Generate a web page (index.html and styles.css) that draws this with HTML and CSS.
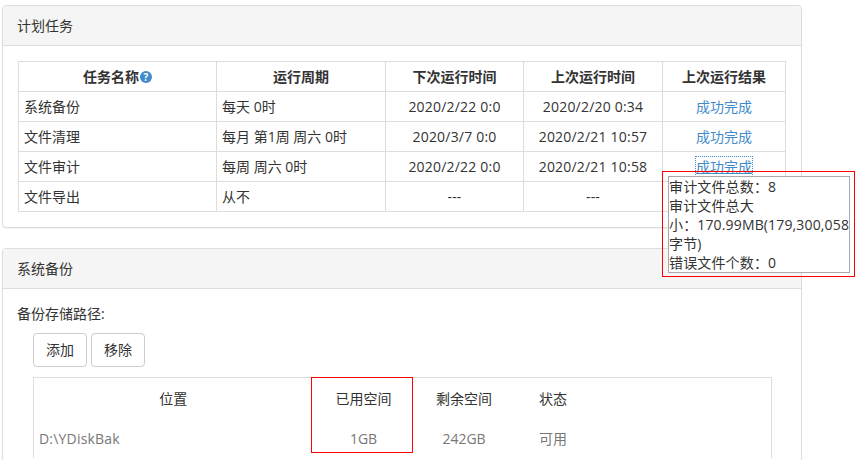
FILE: index.html
```html
<!DOCTYPE html>
<html lang="zh-CN">
<head>
<meta charset="utf-8">
<title>计划任务</title>
<link rel="stylesheet" href="styles.css">
</head>
<body>
<section class="panel">
  <header class="panel-head">计划任务</header>
  <div class="panel-body">
    <table class="tasks">
      <colgroup><col class="c1"><col class="c2"><col class="c3"><col class="c4"><col class="c5"></colgroup>
      <thead>
        <tr><th>任务名称<svg class="help" width="12" height="12" viewBox="0 0 12 12"><circle cx="6" cy="6" r="6" fill="#428bca"/><text x="6" y="9.5" text-anchor="middle" class="help-q">?</text></svg></th><th>运行周期</th><th>下次运行时间</th><th>上次运行时间</th><th>上次运行结果</th></tr>
      </thead>
      <tbody>
        <tr><td>系统备份</td><td>每天 0时</td><td class="mid">2020/2/22 0:0</td><td class="mid">2020/2/20 0:34</td><td class="mid"><a class="link">成功完成</a></td></tr>
        <tr><td>文件清理</td><td>每月 第1周 周六 0时</td><td class="mid">2020/3/7 0:0</td><td class="mid">2020/2/21 10:57</td><td class="mid"><a class="link">成功完成</a></td></tr>
        <tr><td>文件审计</td><td>每周 周六 0时</td><td class="mid">2020/2/22 0:0</td><td class="mid">2020/2/21 10:58</td><td class="mid"><a class="link focus">成功完成</a></td></tr>
        <tr><td>文件导出</td><td>从不</td><td class="mid">---</td><td class="mid">---</td><td class="mid"></td></tr>
      </tbody>
    </table>
  </div>
</section>
<section class="panel second">
  <header class="panel-head">系统备份</header>
  <div class="panel-body">
    <div class="label">备份存储路径:</div>
    <div class="indent">
      <div class="buttons"><button class="btn">添加</button><button class="btn">移除</button></div>
      <table class="paths">
        <colgroup><col class="p1"><col class="p2"><col class="p3"><col class="p4"><col></colgroup>
        <thead><tr><th>位置</th><th>已用空间</th><th>剩余空间</th><th>状态</th><th></th></tr></thead>
        <tbody><tr><td class="left">D:\YDiskBak</td><td>1GB</td><td>242GB</td><td>可用</td><td></td></tr></tbody>
      </table>
    </div>
  </div>
</section>
<div class="tip">审计文件总数：8<br>审计文件总大<br>小：170.99MB(179,300,058<br>字节)<br>错误文件个数：0</div>
<div class="mark mark-tip"></div>
<div class="mark mark-used"></div>
</body>
</html>
```

FILE: styles.css
```css
* { box-sizing: border-box; }
html, body { height: 460px; overflow: hidden; }
body {
  margin: 0;
  padding: 5px 0 0 2px;
  width: 861px;
  position: relative;
  background: #fff;
  font-family: "Open Sans", "Noto Sans CJK SC", sans-serif;
  font-size: 14px;
  line-height: 20px;
  color: #333;
}
.panel {
  width: 800px;
  height: 223px;
  border: 1px solid #ddd;
  border-radius: 4px;
  box-shadow: 0 1px 1px rgba(0,0,0,.05);
}
.second { margin-top: 20px; height: 214px; }
.panel-head {
  height: 40px;
  padding: 10px 14px;
  background: #f5f5f5;
  border-bottom: 1px solid #ddd;
  border-radius: 3px 3px 0 0;
}
.panel-body { padding: 15px; }
table { border-collapse: collapse; table-layout: fixed; }
.tasks { width: 767px; }
.tasks th, .tasks td {
  height: 30px;
  padding: 0 5px;
  border: 1px solid #ddd;
  vertical-align: middle;
  white-space: nowrap;
}
.tasks th { text-align: center; font-weight: 700; }
.tasks td.mid { text-align: center; letter-spacing: .2px; }
.c1 { width: 198px; }
.c2 { width: 169px; }
.c3 { width: 138px; }
.c4 { width: 139px; }
.c5 { width: 123px; }
.help { vertical-align: -1px; margin-left: 1px; }
.help-q { fill: #fff; font-size: 10px; font-weight: 700; }
.link { color: #428bca; letter-spacing: 0; }
.focus { outline: 1px dotted #428bca; text-decoration: underline; }
.label { height: 20px; margin-left: -1px; }
.indent { padding-left: 15px; }
.buttons { display: flex; gap: 4px; margin-top: 9px; }
.btn {
  width: 54px;
  height: 34px;
  padding: 0;
  font: inherit;
  color: #333;
  background: #fff;
  border: 1px solid #ccc;
  border-radius: 4px;
}
.paths { width: 739px; margin-top: 10px; border: 1px solid #ddd; border-bottom: 0; }
.paths th, .paths td { padding: 0 5px; font-weight: 400; text-align: center; }
.paths th { height: 42px; }
.paths td { height: 38px; color: #777; }
.paths td.left { text-align: left; letter-spacing: .2px; }
.p1 { width: 279px; }
.p2 { width: 102px; }
.p3 { width: 99px; }
.p4 { width: 79px; }
.tip {
  position: absolute;
  left: 668px;
  top: 176px;
  width: 182px;
  height: 97px;
  border: 1px solid #aaa;
  background: #fff;
  line-height: 19px;
  letter-spacing: .15px;
  white-space: nowrap;
  overflow: hidden;
}
.mark { position: absolute; border: 1px solid #f00; }
.mark-tip { left: 662px; top: 171px; width: 193px; height: 106px; }
.mark-used { left: 311px; top: 377px; width: 102px; height: 76px; }
```
